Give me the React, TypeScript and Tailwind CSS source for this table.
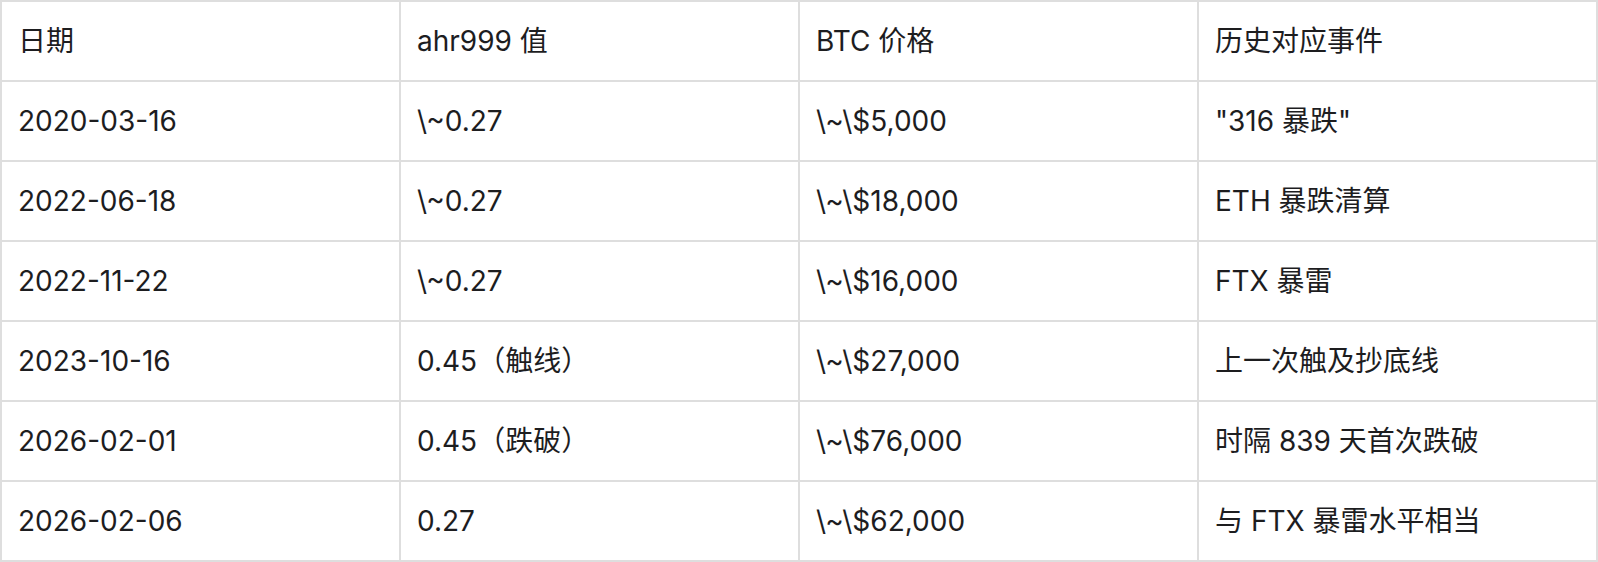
import React from "react";

const headers = ["日期", "ahr999 值", "BTC 价格", "历史对应事件"];

const rows = [
  ["2020-03-16", "\\~0.27", "\\~\\$5,000", "\"316 暴跌\""],
  ["2022-06-18", "\\~0.27", "\\~\\$18,000", "ETH 暴跌清算"],
  ["2022-11-22", "\\~0.27", "\\~\\$16,000", "FTX 暴雷"],
  ["2023-10-16", "0.45（触线）", "\\~\\$27,000", "上一次触及抄底线"],
  ["2026-02-01", "0.45（跌破）", "\\~\\$76,000", "时隔 839 天首次跌破"],
  ["2026-02-06", "0.27", "\\~\\$62,000", "与 FTX 暴雷水平相当"],
];

function Cell({ children }: { children: React.ReactNode }) {
  return (
    <div className="h-[78px] bg-white flex items-center px-[16px] text-[28px] text-[#1d1d1f] whitespace-nowrap">
      {children}
    </div>
  );
}

export default function App() {
  return (
    <div
      className="w-[1598px] h-[562px] bg-white"
      style={{ fontFamily: "Inter, 'Noto Sans CJK SC', sans-serif" }}
    >
      <div className="grid grid-cols-4 gap-[2px] p-[2px] bg-[#dedede]">
        {headers.map((h) => (
          <Cell key={h}>{h}</Cell>
        ))}
        {rows.map((r) =>
          r.map((c, i) => <Cell key={r[0] + i}>{c}</Cell>)
        )}
      </div>
    </div>
  );
}
